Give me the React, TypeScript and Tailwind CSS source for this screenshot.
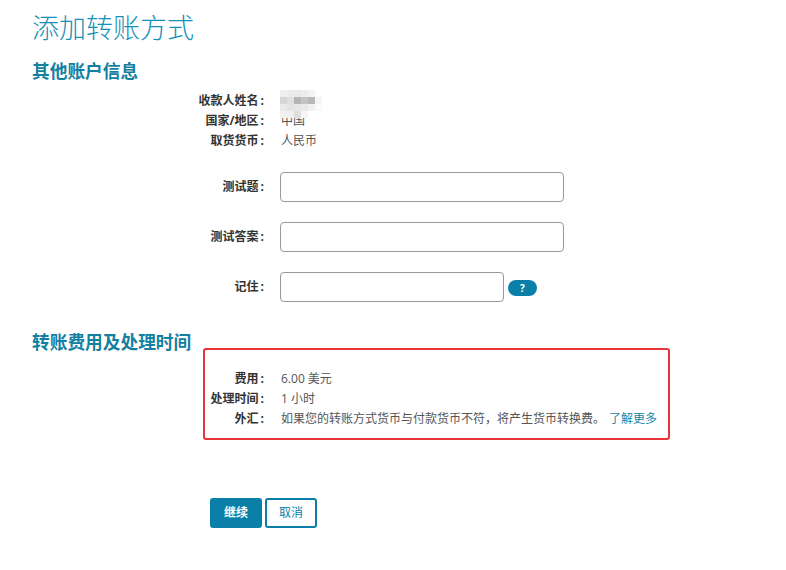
import React from 'react'

const blur = [
  ['#efefef', '#ebebeb', '#e9e9e9', '#ededed', '#f3f3f3', '#ffffff'],
  ['#d6d6d6', '#e0e0e0', '#b5b5b5', '#c4c4c4', '#b9b9b9', '#f4f4f4'],
  ['#eaeaea', '#e4e4e4', '#e7e7e7', '#e9e9e9', '#f1f1f1', '#fafafa'],
  ['#f1f1f1', '#efefef', '#dedede', '#f5f5f5', '#ffffff', '#ffffff'],
]

function Label({ text }: { text: string }) {
  return (
    <>
      {text}
      <span className="ml-[2px] mr-[2px]">:</span>
    </>
  )
}

function InfoRow({ label, children, labelW = 'w-[234px]' }: { label: string; children: React.ReactNode; labelW?: string }) {
  return (
    <div className="flex h-[20px] items-center text-[12px] leading-[20px]">
      <div className={`${labelW} shrink-0 text-right font-bold text-[#333]`}>
        <Label text={label} />
      </div>
      <div className="relative ml-[15px] text-[#555]">{children}</div>
    </div>
  )
}

function FieldRow({ label, wide = true, help = false }: { label: string; wide?: boolean; help?: boolean }) {
  return (
    <div className="flex h-[30px] items-center">
      <div className="w-[234px] shrink-0 text-right text-[12px] font-bold text-[#333]">
        <Label text={label} />
      </div>
      <input
        className={`ml-[14px] h-[30px] rounded-[4px] border border-[#9a9a9a] bg-white px-2 text-[12px] outline-none ${wide ? 'w-[284px]' : 'w-[224px]'}`}
      />
      {help && (
        <span className="ml-[4px] mt-[2px] flex h-[16px] w-[29px] items-center justify-center rounded-full bg-[#0a80a8] text-[10px] font-bold text-white">
          ?
        </span>
      )}
    </div>
  )
}

export default function App() {
  return (
    <div
      className="min-h-[570px] bg-white pl-8 pt-2"
      style={{ fontFamily: '"Open Sans", "Noto Sans CJK SC", sans-serif' }}
    >
      <h1 className="text-[27px] font-light leading-[40px] text-[#1591b7]">添加转账方式</h1>
      <h2 className="mt-[11px] text-[17.7px] font-bold leading-[24px] text-[#14809f]">其他账户信息</h2>

      <div className="mt-2">
        <InfoRow label="收款人姓名">
          <span className="invisible">某某某</span>
          <div className="absolute left-[-1px] top-[-1px] z-10 flex flex-col">
            {blur.map((row, i) => (
              <div key={i} className="flex">
                {row.map((c, j) => (
                  <div key={j} className="h-[7px] w-[7px]" style={{ backgroundColor: c }} />
                ))}
              </div>
            ))}
          </div>
        </InfoRow>
        <InfoRow label="国家/地区">中国</InfoRow>
        <InfoRow label="取货货币">人民币</InfoRow>
      </div>

      <div className="mt-[21px] flex flex-col gap-5">
        <FieldRow label="测试题" />
        <FieldRow label="测试答案" />
        <FieldRow label="记住" wide={false} help />
      </div>

      <h2 className="mt-[30px] text-[17.7px] font-bold leading-[20px] text-[#14809f]">转账费用及处理时间</h2>

      <div className="ml-[171px] -mt-[4px] h-[92px] w-[467px] rounded-[3px] border-2 border-[#e8353a] pt-[19px]">
        <InfoRow label="费用" labelW="w-[61px]">6.00 美元</InfoRow>
        <InfoRow label="处理时间" labelW="w-[61px]">1 小时</InfoRow>
        <InfoRow label="外汇" labelW="w-[61px]">
          如果您的转账方式货币与付款货币不符，将产生货币转换费。
          <a className="ml-1 text-[#1a86a8]">了解更多</a>
        </InfoRow>
      </div>

      <div className="ml-[178px] mt-[58px] flex gap-[3px]">
        <button className="h-[30px] w-[52px] rounded-[3px] bg-[#0a80a8] text-[12px] font-bold text-white">继续</button>
        <button className="h-[30px] w-[52px] rounded-[3px] border-2 border-[#0a80a8] bg-white text-[12px] text-[#0a80a8]">取消</button>
      </div>
    </div>
  )
}
